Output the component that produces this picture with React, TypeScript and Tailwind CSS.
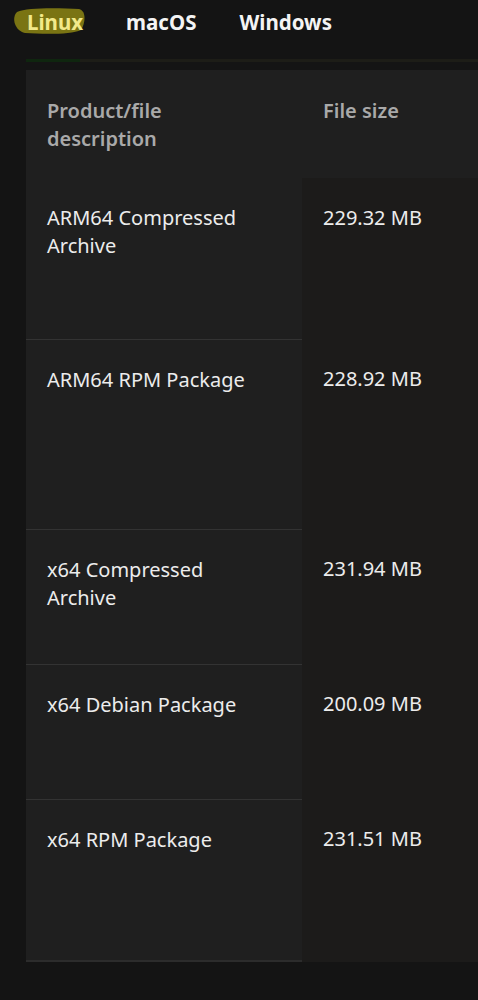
import React from 'react';

const rows = [
  { name: 'ARM64 Compressed Archive', size: '229.32 MB', h: 'h-[161px]' },
  { name: 'ARM64 RPM Package', size: '228.92 MB', h: 'h-[190px]' },
  { name: 'x64 Compressed Archive', size: '231.94 MB', h: 'h-[135px]' },
  { name: 'x64 Debian Package', size: '200.09 MB', h: 'h-[135px]' },
  { name: 'x64 RPM Package', size: '231.51 MB', h: 'h-[163px]' },
];

const App = () => {
  return (
    <div className="min-h-[1000px] w-[478px] overflow-hidden bg-[#141414] text-[20px]" style={{ fontFamily: '"Noto Sans", "Open Sans", sans-serif' }}>
      {/* Tabs */}
      <div className="flex h-[44px] items-center gap-[43px] pl-[27px] text-[20.5px] font-bold">
        <div className="relative">
          <svg className="absolute left-[-16px] top-[-1px]" width="76" height="30" viewBox="0 0 76 30">
            <path d="M6 6 C16 1 50 2 68 3 C76 5 74 18 70 24 C60 29 30 28 14 27 C4 25 0 12 6 6 Z" fill="#7a7413" />
          </svg>
          <span className="relative text-[#f2e98a]">Linux</span>
        </div>
        <span className="text-[#f4f4f4]">macOS</span>
        <span className="text-[#f4f4f4]">Windows</span>
      </div>

      {/* Tab underline */}
      <div className="mt-[15px] ml-[26px] flex h-[3px]">
        <div className="w-[54px] bg-[#0f260f]" />
        <div className="flex-1 bg-[#1d1d17]" />
      </div>

      {/* Table */}
      <div className="mt-[8px] ml-[26px]">
        <div className="flex h-[108px] bg-[#1f1f1f] font-semibold leading-[28px] text-[#a9a9a9]">
          <div className="w-[276px] pl-[21px] pt-[27px]">Product/file<br />description</div>
          <div className="pl-[21px] pt-[27px]">File size</div>
        </div>
        {rows.map((r, i) => (
          <div key={r.name} className={`flex ${r.h} leading-[28px] text-[#ececec]`}>
            <div className={`w-[276px] bg-[#1f1f1f] pl-[21px] pr-[40px] pt-[26px] ${i > 0 ? 'border-t border-[#333]' : ''} ${i === rows.length - 1 ? 'border-b-2 border-b-[#2c2c2c]' : ''}`}>
              {r.name}
            </div>
            <div className="flex-1 bg-[#1c1b1a] pl-[21px] pt-[26px]">{r.size}</div>
          </div>
        ))}
      </div>
    </div>
  );
};

export default App;
